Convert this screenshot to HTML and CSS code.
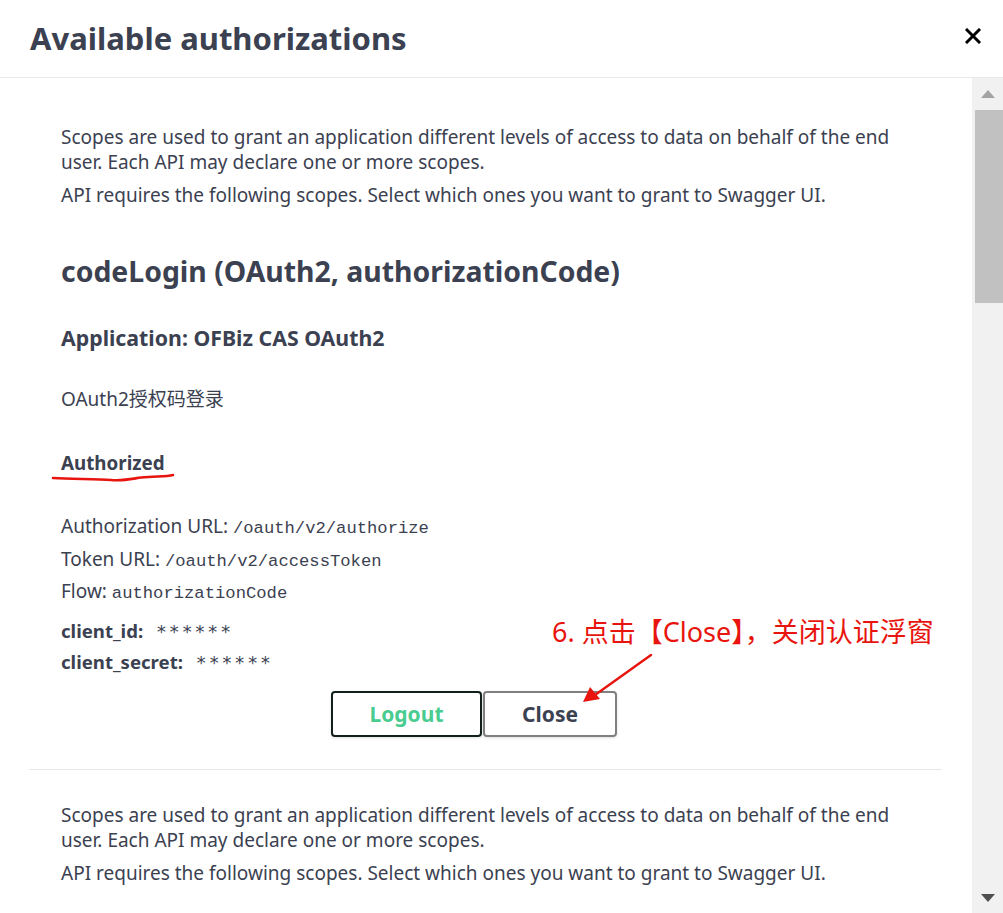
FILE: index.html
```html
<!DOCTYPE html>
<html lang="en">
<head>
<meta charset="utf-8">
<title>Available authorizations</title>
<link rel="stylesheet" href="styles.css">
</head>
<body>
<div class="modal">
  <header class="modal-header">
    <h1 class="modal-title">Available authorizations</h1>
    <button class="close-x" aria-label="Close">
      <svg width="16" height="16" viewBox="0 0 16 16"><path d="M2 2 L14 14 M14 2 L2 14" stroke="#000" stroke-width="3" stroke-linecap="square"/></svg>
    </button>
  </header>
  <div class="modal-body">
    <div class="content">
      <div class="auth-container">
        <p class="desc">Scopes are used to grant an application different levels of access to data on behalf of the end user. Each API may declare one or more scopes.</p>
        <p class="desc second">API requires the following scopes. Select which ones you want to grant to Swagger UI.</p>
        <h2 class="scheme">codeLogin (OAuth2, authorizationCode)</h2>
        <h3 class="app">Application: OFBiz CAS OAuth2</h3>
        <p class="note">OAuth2授权码登录</p>
        <h4 class="authorized">Authorized</h4>
        <p class="row">Authorization URL: <code>/oauth/v2/authorize</code></p>
        <p class="row">Token URL: <code>/oauth/v2/accessToken</code></p>
        <p class="row">Flow: <code>authorizationCode</code></p>
        <p class="cred first"><b>client_id:</b> <code>******</code></p>
        <p class="cred"><b>client_secret:</b> <code>******</code></p>
        <div class="btn-wrap">
          <button class="btn logout">Logout</button>
          <button class="btn close">Close</button>
        </div>
      </div>
      <div class="auth-container last">
        <p class="desc">Scopes are used to grant an application different levels of access to data on behalf of the end user. Each API may declare one or more scopes.</p>
        <p class="desc second">API requires the following scopes. Select which ones you want to grant to Swagger UI.</p>
      </div>
    </div>
    <div class="scrollbar">
      <div class="arrow up"></div>
      <div class="thumb"></div>
      <div class="track"></div>
      <div class="arrow down"></div>
    </div>
  </div>
</div>

<svg class="underline" width="130" height="14" viewBox="0 0 130 14">
  <path d="M2 8 C 20 9, 45 9, 60 10 C 72 11, 80 9, 90 7.5 C 105 6, 115 7, 122 5" fill="none" stroke="#e8150e" stroke-width="2.6" stroke-linecap="round"/>
</svg>
<div class="annotation">6. 点击【Close】，关闭认证浮窗</div>
<svg class="arrow-line" width="90" height="60" viewBox="0 0 90 60">
  <path d="M74 2 L18 42" stroke="#e8150e" stroke-width="2.4" stroke-linecap="round"/>
  <path d="M6 49 L13 34 L23 46 Z" fill="#e8150e"/>
</svg>
</body>
</html>
```

FILE: styles.css
```css
* { box-sizing: border-box; }

html, body {
  margin: 0;
  padding: 0;
  background: #fff;
}

body {
  font-family: "Noto Sans", "Noto Sans CJK SC", sans-serif;
  color: #3b4151;
  width: 1003px;
  height: 913px;
  overflow: hidden;
  position: relative;
}

.modal-header {
  height: 78px;
  border-bottom: 1px solid #ebebeb;
  display: flex;
  align-items: center;
  justify-content: space-between;
  padding: 0 22px 0 30px;
}

.modal-title {
  margin: 0;
  font-size: 31px;
  font-weight: 700;
  color: #3b4151;
  padding-bottom: 1px;
}

.close-x {
  border: 0;
  background: none;
  padding: 0;
  width: 16px;
  height: 16px;
  display: flex;
  margin-bottom: 6px;
}

.modal-body {
  display: flex;
  height: 835px;
}

.content {
  width: 972px;
  padding: 0 30px 0 29px;
}

.scrollbar {
  width: 31px;
  background: #f1f1f1;
  display: flex;
  flex-direction: column;
  align-items: center;
}

.scrollbar .arrow {
  width: 0;
  height: 0;
  border-left: 7px solid transparent;
  border-right: 7px solid transparent;
}

.scrollbar .arrow.up {
  border-bottom: 8px solid #a3a3a3;
  margin-top: 12px;
  margin-bottom: 12px;
}

.scrollbar .arrow.down {
  border-top: 8px solid #505050;
  margin-bottom: 11px;
}

.scrollbar .thumb {
  width: 28px;
  height: 193px;
  background: #c1c1c1;
  margin-left: 3px;
}

.scrollbar .track { flex: 1; }

.auth-container {
  padding: 0 32px 32px;
  border-bottom: 1px solid #e6e6e6;
}

.auth-container.last {
  border-bottom: 0;
  padding-top: 33px;
}

.auth-container:first-child { padding-top: 47px; }

p { margin: 0; }

.desc {
  font-size: 19px;
  line-height: 25px;
}

.desc.second { margin-top: 8px; }

.scheme {
  margin: 46px 0 0;
  font-size: 28.4px;
  line-height: 34px;
  font-weight: 700;
}

.app {
  margin: 36px 0 0;
  font-size: 21.3px;
  line-height: 28px;
  font-weight: 700;
}

.note {
  margin-top: 35px;
  font-size: 19px;
  line-height: 25px;
}

.authorized {
  margin: 39px 0 0;
  font-size: 18.8px;
  line-height: 25px;
  font-weight: 700;
}

.row {
  font-size: 19px;
  line-height: 32.5px;
  height: 32.5px;
}

.authorized + .row { margin-top: 34px; }

code {
  font-family: "Liberation Mono", "DejaVu Sans Mono", monospace;
  font-size: 17.2px;
  line-height: 1;
  color: #3b4151;
}

.cred {
  font-size: 18.6px;
  line-height: 31px;
  height: 31px;
}

.cred.first { margin-top: 7px; }

.cred b { font-weight: 700; margin-right: 8px; }

.cred code {
  font-family: "DejaVu Sans Mono", monospace;
  font-size: 18px;
  letter-spacing: 2px;
}

.btn-wrap {
  display: flex;
  justify-content: center;
  gap: 1px;
  padding-right: 23px;
  margin-top: 14px;
}

.btn {
  height: 46px;
  font-family: "Noto Sans", sans-serif;
  font-size: 21px;
  font-weight: 700;
  border-radius: 4px;
  background: #fff;
  box-shadow: 0 1px 3px rgba(0, 0, 0, 0.12);
  padding: 0;
}

.btn.logout {
  width: 151px;
  color: #49cc90;
  border: 2px solid #12201a;
}

.btn.close {
  width: 134px;
  color: #3b4151;
  border: 2px solid #808080;
}

.underline {
  position: absolute;
  left: 51px;
  top: 470px;
}

.annotation {
  position: absolute;
  left: 552px;
  top: 614px;
  font-family: "Noto Sans", "Noto Sans CJK SC", sans-serif;
  font-size: 27px;
  line-height: 36px;
  color: #e8150e;
  white-space: nowrap;
}

.arrow-line {
  position: absolute;
  left: 577px;
  top: 653px;
}
```
